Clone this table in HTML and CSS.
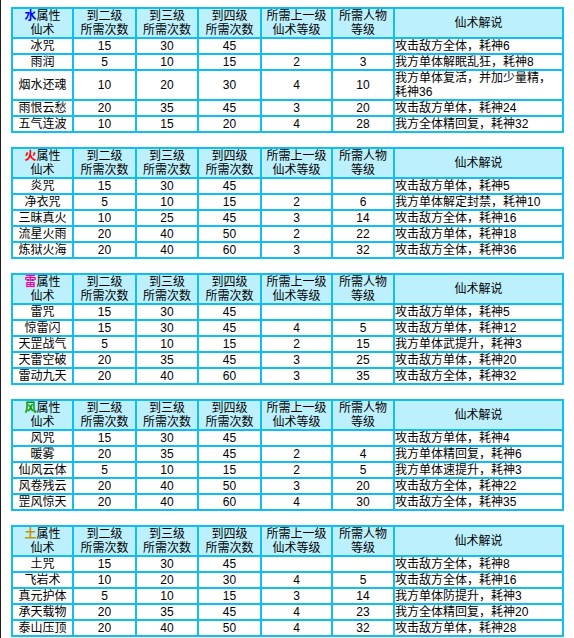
FILE: index.html
```html
<!DOCTYPE html>
<html lang="zh-CN">
<head>
<meta charset="utf-8">
<title>仙术</title>
<link rel="stylesheet" href="styles.css">
</head>
<body>
<div class="page">

<table class="skills">
<colgroup><col class="c1"><col class="c2"><col class="c3"><col class="c4"><col class="c5"><col class="c6"><col class="c7"></colgroup>
<tr class="head"><td><b class="el water">水</b>属性<br>仙术</td><td>到二级<br>所需次数</td><td>到三级<br>所需次数</td><td>到四级<br>所需次数</td><td>所需上一级<br>仙术等级</td><td>所需人物<br>等级</td><td>仙术解说</td></tr>
<tr><td>冰咒</td><td>15</td><td>30</td><td>45</td><td></td><td></td><td class="desc">攻击敌方全体，耗神6</td></tr>
<tr><td>雨润</td><td>5</td><td>10</td><td>15</td><td>2</td><td>3</td><td class="desc">我方单体解眠乱狂，耗神8</td></tr>
<tr><td>烟水还魂</td><td>10</td><td>20</td><td>30</td><td>4</td><td>10</td><td class="desc">我方单体复活，并加少量精，耗神36</td></tr>
<tr><td>雨恨云愁</td><td>20</td><td>35</td><td>45</td><td>3</td><td>20</td><td class="desc">攻击敌方单体，耗神24</td></tr>
<tr><td>五气连波</td><td>10</td><td>15</td><td>20</td><td>4</td><td>28</td><td class="desc">我方全体精回复，耗神32</td></tr>
</table>

<table class="skills">
<colgroup><col class="c1"><col class="c2"><col class="c3"><col class="c4"><col class="c5"><col class="c6"><col class="c7"></colgroup>
<tr class="head"><td><b class="el fire">火</b>属性<br>仙术</td><td>到二级<br>所需次数</td><td>到三级<br>所需次数</td><td>到四级<br>所需次数</td><td>所需上一级<br>仙术等级</td><td>所需人物<br>等级</td><td>仙术解说</td></tr>
<tr><td>炎咒</td><td>15</td><td>30</td><td>45</td><td></td><td></td><td class="desc">攻击敌方单体，耗神5</td></tr>
<tr><td>净衣咒</td><td>5</td><td>10</td><td>15</td><td>2</td><td>6</td><td class="desc">我方单体解定封禁，耗神10</td></tr>
<tr><td>三昧真火</td><td>10</td><td>25</td><td>45</td><td>3</td><td>14</td><td class="desc">攻击敌方全体，耗神16</td></tr>
<tr><td>流星火雨</td><td>20</td><td>40</td><td>50</td><td>2</td><td>22</td><td class="desc">攻击敌方单体，耗神18</td></tr>
<tr><td>炼狱火海</td><td>20</td><td>40</td><td>60</td><td>3</td><td>32</td><td class="desc">攻击敌方全体，耗神36</td></tr>
</table>

<table class="skills">
<colgroup><col class="c1"><col class="c2"><col class="c3"><col class="c4"><col class="c5"><col class="c6"><col class="c7"></colgroup>
<tr class="head"><td><b class="el thunder">雷</b>属性<br>仙术</td><td>到二级<br>所需次数</td><td>到三级<br>所需次数</td><td>到四级<br>所需次数</td><td>所需上一级<br>仙术等级</td><td>所需人物<br>等级</td><td>仙术解说</td></tr>
<tr><td>雷咒</td><td>15</td><td>30</td><td>45</td><td></td><td></td><td class="desc">攻击敌方单体，耗神5</td></tr>
<tr><td>惊雷闪</td><td>15</td><td>30</td><td>45</td><td>4</td><td>5</td><td class="desc">攻击敌方单体，耗神12</td></tr>
<tr><td>天罡战气</td><td>5</td><td>10</td><td>15</td><td>2</td><td>15</td><td class="desc">我方单体武提升，耗神3</td></tr>
<tr><td>天雷空破</td><td>20</td><td>35</td><td>45</td><td>3</td><td>25</td><td class="desc">攻击敌方单体，耗神20</td></tr>
<tr><td>雷动九天</td><td>20</td><td>40</td><td>60</td><td>3</td><td>35</td><td class="desc">攻击敌方全体，耗神32</td></tr>
</table>

<table class="skills">
<colgroup><col class="c1"><col class="c2"><col class="c3"><col class="c4"><col class="c5"><col class="c6"><col class="c7"></colgroup>
<tr class="head"><td><b class="el wind">风</b>属性<br>仙术</td><td>到二级<br>所需次数</td><td>到三级<br>所需次数</td><td>到四级<br>所需次数</td><td>所需上一级<br>仙术等级</td><td>所需人物<br>等级</td><td>仙术解说</td></tr>
<tr><td>风咒</td><td>15</td><td>30</td><td>45</td><td></td><td></td><td class="desc">攻击敌方单体，耗神4</td></tr>
<tr><td>暖雾</td><td>20</td><td>35</td><td>45</td><td>2</td><td>4</td><td class="desc">我方单体精回复，耗神6</td></tr>
<tr><td>仙风云体</td><td>5</td><td>10</td><td>15</td><td>2</td><td>5</td><td class="desc">我方单体速提升，耗神3</td></tr>
<tr><td>风卷残云</td><td>20</td><td>40</td><td>50</td><td>3</td><td>20</td><td class="desc">攻击敌方全体，耗神22</td></tr>
<tr><td>罡风惊天</td><td>20</td><td>40</td><td>60</td><td>4</td><td>30</td><td class="desc">攻击敌方全体，耗神35</td></tr>
</table>

<table class="skills">
<colgroup><col class="c1"><col class="c2"><col class="c3"><col class="c4"><col class="c5"><col class="c6"><col class="c7"></colgroup>
<tr class="head"><td><b class="el earth">土</b>属性<br>仙术</td><td>到二级<br>所需次数</td><td>到三级<br>所需次数</td><td>到四级<br>所需次数</td><td>所需上一级<br>仙术等级</td><td>所需人物<br>等级</td><td>仙术解说</td></tr>
<tr><td>土咒</td><td>15</td><td>30</td><td>45</td><td></td><td></td><td class="desc">攻击敌方全体，耗神8</td></tr>
<tr><td>飞岩术</td><td>10</td><td>20</td><td>30</td><td>4</td><td>5</td><td class="desc">攻击敌方全体，耗神16</td></tr>
<tr><td>真元护体</td><td>5</td><td>10</td><td>15</td><td>3</td><td>14</td><td class="desc">我方单体防提升，耗神3</td></tr>
<tr><td>承天载物</td><td>20</td><td>35</td><td>45</td><td>4</td><td>23</td><td class="desc">我方全体精回复，耗神20</td></tr>
<tr><td>泰山压顶</td><td>20</td><td>40</td><td>50</td><td>4</td><td>32</td><td class="desc">攻击敌方单体，耗神28</td></tr>
</table>

</div>
</body>
</html>
```

FILE: styles.css
```css
html, body {
  margin: 0;
  padding: 0;
  background: #ffffff;
}

body {
  font-family: "Liberation Sans", "Noto Sans CJK SC", sans-serif;
  font-size: 12px;
  line-height: 14px;
  color: #000000;
}

.page {
  border-left: 1px solid #1e1e1e;
  min-height: 638px;
  box-sizing: border-box;
  padding: 7px 0 0 10px;
}

.skills {
  table-layout: fixed;
  width: 553px;
  border-collapse: separate;
  border-spacing: 2px;
  background: #0fbff0;
  margin: 0 0 14px 0;
}

.skills td {
  padding: 0;
  height: 14px;
  line-height: 14px;
  background: #ffffff;
  text-align: center;
  vertical-align: middle;
  white-space: normal;
  overflow: hidden;
}

.skills .head td {
  background: #bdf0fd;
  height: 28px;
}

.skills td.desc {
  text-align: left;
}

.c1 { width: 59px; }
.c2 { width: 61px; }
.c3 { width: 60px; }
.c4 { width: 61px; }
.c5 { width: 69px; }
.c6 { width: 60px; }
.c7 { width: 167px; }

.el { font-weight: bold; }
.water { color: #0000ff; }
.fire { color: #ff0000; }
.thunder { color: #ff00a0; }
.wind { color: #009900; }
.earth { color: #c89600; }
```
